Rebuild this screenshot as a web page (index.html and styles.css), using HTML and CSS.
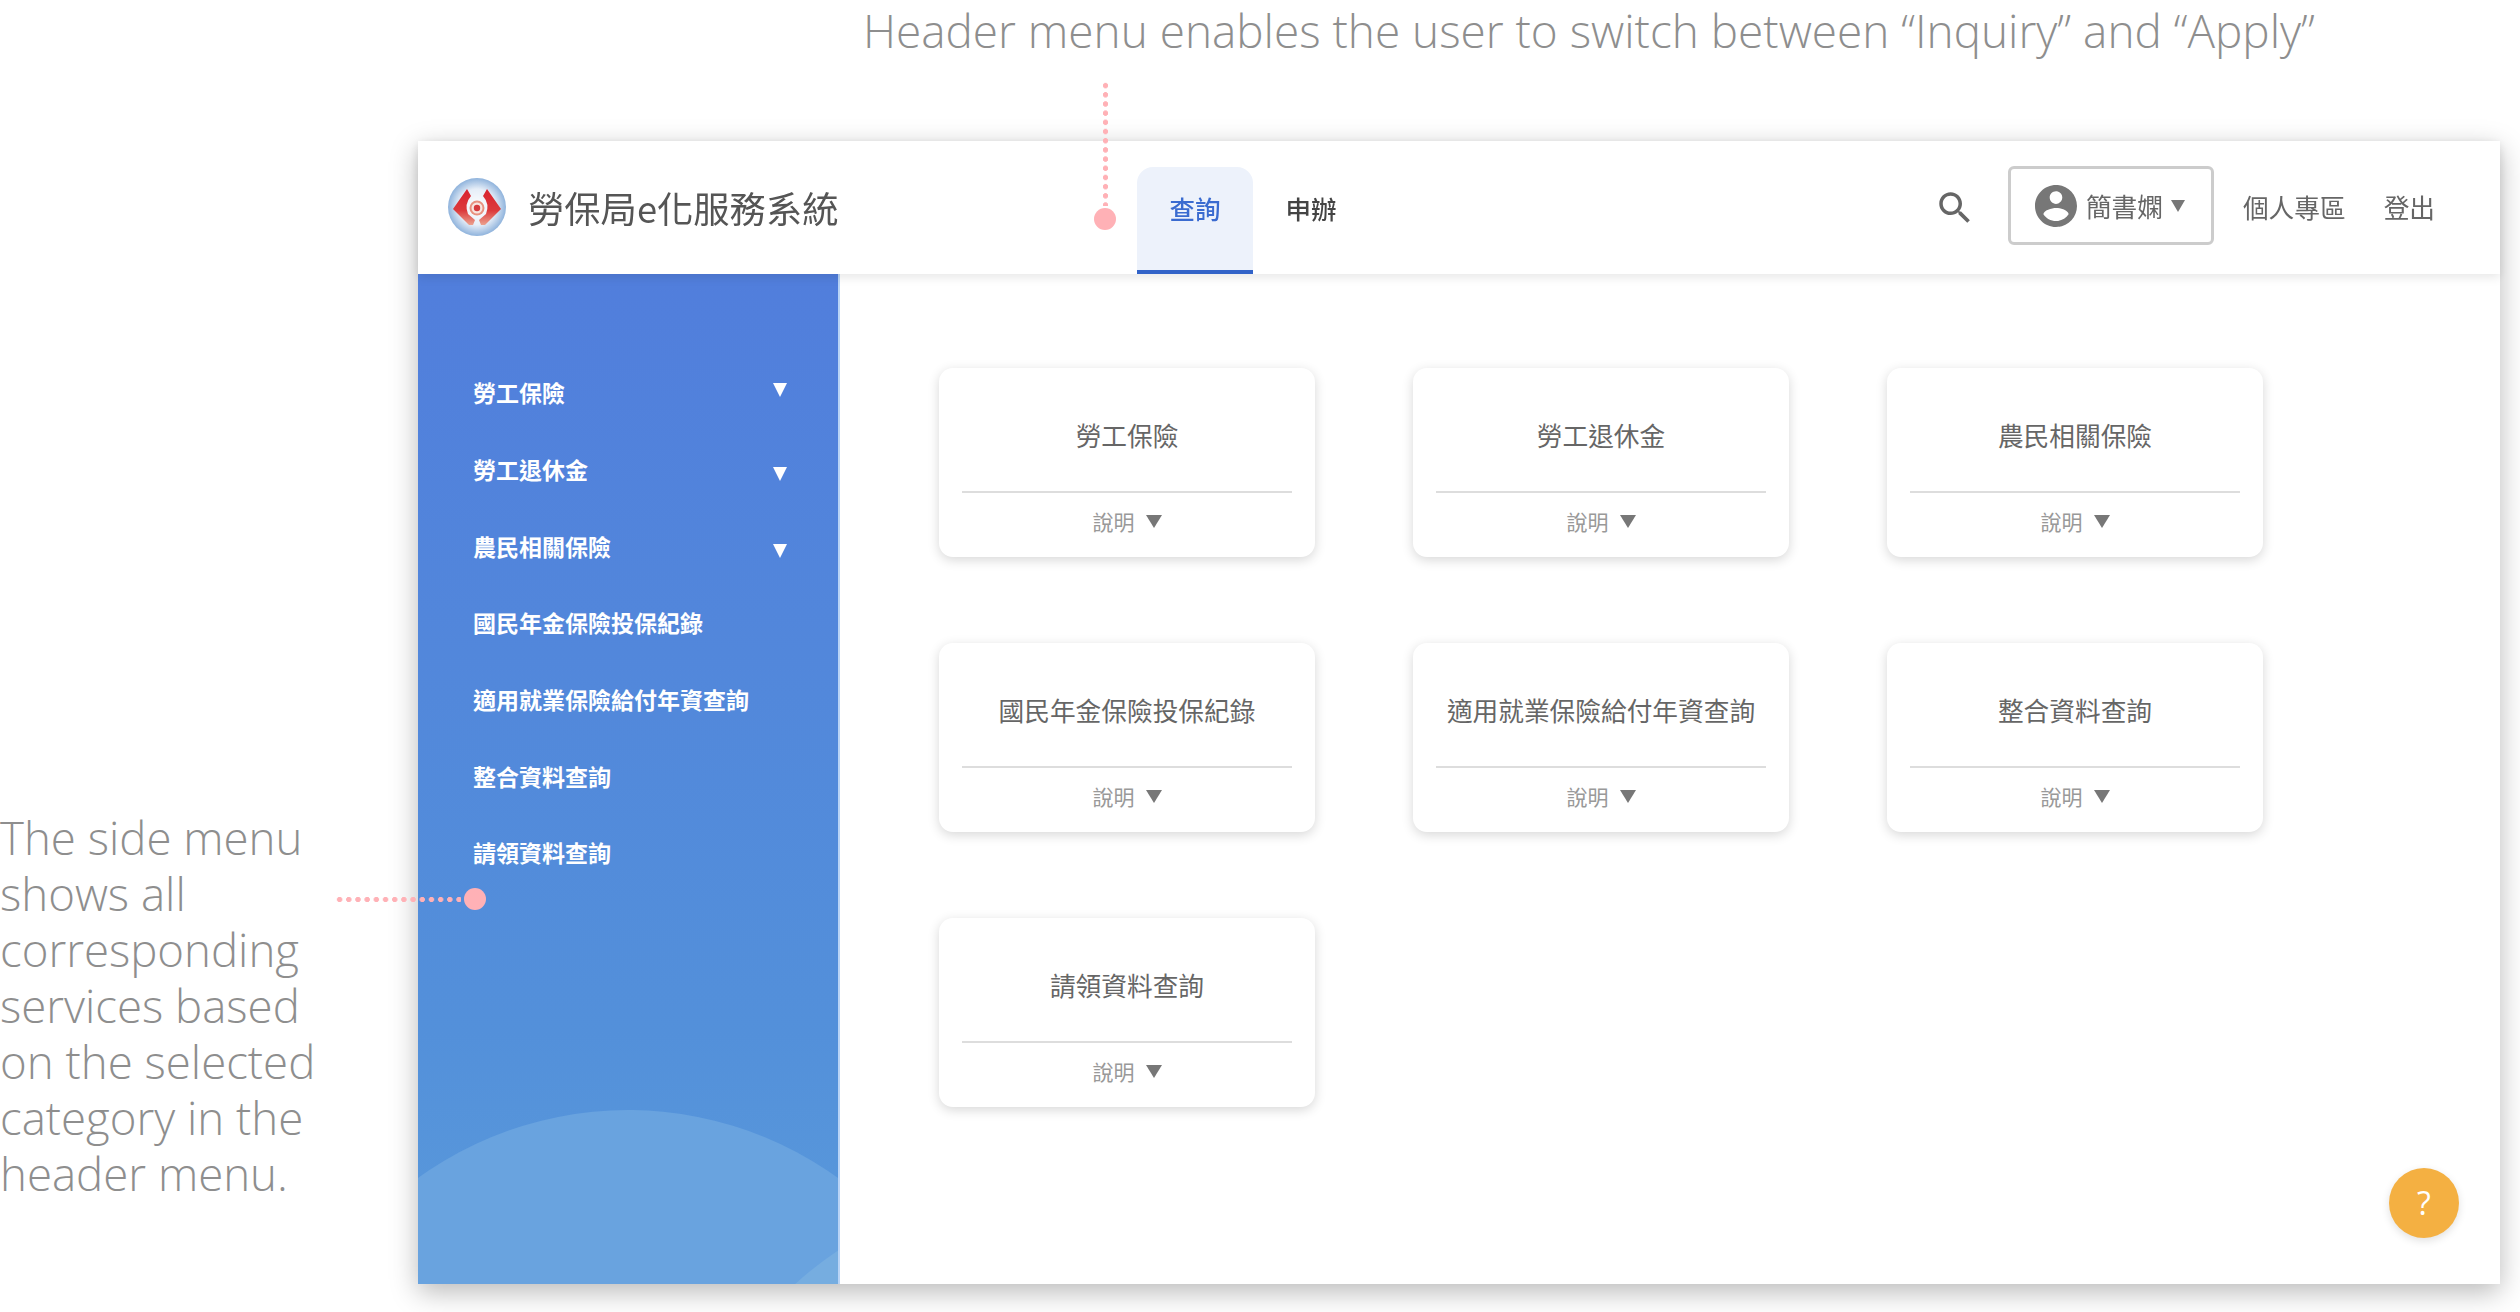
FILE: index.html
```html
<!DOCTYPE html>
<html lang="zh-Hant">
<head>
    <meta charset="UTF-8">
    <meta name="viewport" content="width=device-width, initial-scale=1.0">
    <title>勞保局e化服務系統</title>
    <link rel="stylesheet" href="styles.css">
</head>
<body>
    <div class="page">
        <p class="note-top">Header menu enables the user to switch between “Inquiry” and “Apply”</p>

        <div class="stage">
            <p class="note-side">The side menu shows all corresponding services based on the selected category in the header menu.</p>

            <div class="frame">
                <header class="topbar">
                    <div class="brand">
                        <svg class="logo" viewBox="0 0 58 58">
                            <defs>
                                <radialGradient id="logoBg" cx="50%" cy="50%" r="50%">
                                    <stop offset="0%" stop-color="#ffffff"/>
                                    <stop offset="62%" stop-color="#e6eef8"/>
                                    <stop offset="100%" stop-color="#8fb3dc"/>
                                </radialGradient>
                                <linearGradient id="logoRed" x1="0" y1="0" x2="0" y2="1">
                                    <stop offset="0%" stop-color="#d9222e"/>
                                    <stop offset="60%" stop-color="#dc3a3c"/>
                                    <stop offset="100%" stop-color="#eba28f"/>
                                </linearGradient>
                            </defs>
                            <circle cx="29" cy="29" r="29" fill="url(#logoBg)"/>
                            <path d="M5 31 L19 11 L23 18 Q16 26 20 36 L27 42 L25 47 L21 47 Z" fill="url(#logoRed)"/>
                            <path d="M53 31 L39 11 L35 18 Q42 26 38 36 L31 42 L33 47 L37 47 Z" fill="url(#logoRed)"/>
                            <circle cx="29" cy="30" r="7.5" fill="#e8917f"/>
                            <circle cx="29" cy="30" r="5.5" fill="#f7e4df"/>
                            <circle cx="29" cy="30" r="3.2" fill="#d63a3c"/>
                        </svg>
                        <span class="brand-name">勞保局e化服務系統</span>
                    </div>
                    <nav class="tabs">
                        <a class="tab active">查詢</a>
                        <a class="tab">申辦</a>
                    </nav>
                    <div class="tools">
                        <svg class="search-icon" viewBox="0 0 24 24"><path d="M15.5 14h-.79l-.28-.27C15.41 12.59 16 11.11 16 9.5 16 5.91 13.09 3 9.5 3S3 5.91 3 9.5 5.91 16 9.5 16c1.61 0 3.09-.59 4.23-1.57l.27.28v.79l5 4.99L20.49 19l-4.99-5zm-6 0C7.01 14 5 11.99 5 9.5S7.01 5 9.5 5 14 7.01 14 9.5 11.99 14 9.5 14z"/></svg>
                        <div class="user-btn">
                            <svg class="avatar" viewBox="2 2 20 20"><path d="M12 2C6.48 2 2 6.48 2 12s4.48 10 10 10 10-4.48 10-10S17.52 2 12 2zm0 3c1.66 0 3 1.34 3 3s-1.34 3-3 3-3-1.34-3-3 1.34-3 3-3zm0 14.2c-2.5 0-4.71-1.28-6-3.22.03-1.99 4-3.08 6-3.08 1.99 0 5.97 1.09 6 3.08-1.29 1.94-3.5 3.22-6 3.22z"/></svg>
                            <span>簡書嫻</span>
                            <i class="tri tri-user"></i>
                        </div>
                        <a class="tool-link">個人專區</a>
                        <a class="tool-link">登出</a>
                    </div>
                </header>

                <div class="body-row">
                    <aside class="sidebar">
                        <ul class="side-list">
                            <li class="side-item"><span>勞工保險</span><i class="tri tri-side tri-first"></i></li>
                            <li class="side-item"><span>勞工退休金</span><i class="tri tri-side"></i></li>
                            <li class="side-item"><span>農民相關保險</span><i class="tri tri-side"></i></li>
                            <li class="side-item"><span>國民年金保險投保紀錄</span></li>
                            <li class="side-item"><span>適用就業保險給付年資查詢</span></li>
                            <li class="side-item"><span>整合資料查詢</span></li>
                            <li class="side-item"><span>請領資料查詢</span></li>
                        </ul>
                    </aside>

                    <main class="content">
                        <div class="cards">
                            <div class="card"><div class="card-title">勞工保險</div><div class="card-foot">說明<i class="tri tri-card"></i></div></div>
                            <div class="card"><div class="card-title">勞工退休金</div><div class="card-foot">說明<i class="tri tri-card"></i></div></div>
                            <div class="card"><div class="card-title">農民相關保險</div><div class="card-foot">說明<i class="tri tri-card"></i></div></div>
                            <div class="card"><div class="card-title">國民年金保險投保紀錄</div><div class="card-foot">說明<i class="tri tri-card"></i></div></div>
                            <div class="card"><div class="card-title">適用就業保險給付年資查詢</div><div class="card-foot">說明<i class="tri tri-card"></i></div></div>
                            <div class="card"><div class="card-title">整合資料查詢</div><div class="card-foot">說明<i class="tri tri-card"></i></div></div>
                            <div class="card"><div class="card-title">請領資料查詢</div><div class="card-foot">說明<i class="tri tri-card"></i></div></div>
                        </div>
                        <div class="help-btn">?</div>
                    </main>
                </div>
            </div>
        </div>

        <!-- annotation pins sit on top of the mockup -->
        <div class="leader leader-v"></div>
        <div class="pin pin-top"></div>
        <div class="leader leader-h"></div>
        <div class="pin pin-side"></div>
    </div>
</body>
</html>
```

FILE: styles.css
```css
html, body {
    margin: 0;
    padding: 0;
    background: #fff;
}
body {
    font-family: "Noto Sans CJK TC", "Noto Sans", sans-serif;
}
.page {
    position: relative;
    width: 2520px;
    height: 1312px;
    overflow: hidden;
}
.note-top, .note-side {
    margin: 0;
    font-family: "Open Sans", sans-serif;
    font-weight: 300;
    color: #8e8e8e;
}
.note-top {
    height: 141px;
    padding-left: 863px;
    font-size: 45.9px;
    line-height: 60px;
    white-space: nowrap;
    box-sizing: border-box;
}
.stage {
    display: flex;
}
.note-side {
    width: 330px;
    margin-right: 88px;
    padding-top: 668px;
    font-size: 45.6px;
    line-height: 56px;
}
.frame {
    width: 2082px;
    height: 1143px;
    display: flex;
    flex-direction: column;
    background: #fff;
    box-shadow: 0 8px 26px rgba(0, 0, 0, 0.28);
    filter: blur(0.5px);
}

/* header */
.topbar {
    position: relative;
    z-index: 2;
    flex: 0 0 133px;
    display: flex;
    align-items: stretch;
    background: #fff;
    box-shadow: 0 3px 10px rgba(0, 0, 0, 0.1);
}
.brand {
    width: 719px;
    display: flex;
    align-items: center;
    padding-left: 30px;
    box-sizing: border-box;
}
.logo {
    width: 58px;
    height: 58px;
    margin-right: 22px;
    margin-top: -2px;
}
.brand-name {
    font-size: 36.3px;
    color: #555;
    margin-top: -2px;
}
.tabs {
    display: flex;
    align-items: flex-end;
    gap: 0;
}
.tab {
    width: 116px;
    height: 107px;
    box-sizing: border-box;
    display: flex;
    align-items: center;
    justify-content: center;
    padding-bottom: 22px;
    font-size: 25.5px;
    font-weight: 500;
    color: #444;
    border-bottom: 4px solid transparent;
    border-radius: 16px 16px 0 0;
}
.tab.active {
    color: #3a6bd0;
    background: #edf2fb;
    border-bottom-color: #3263c8;
}
.tools {
    margin-left: auto;
    display: flex;
    align-items: center;
    padding-right: 65px;
    font-size: 25.7px;
    color: #666;
}
.search-icon {
    width: 42px;
    height: 42px;
    fill: #666;
    margin-right: 32px;
}
.user-btn {
    width: 206px;
    height: 79px;
    box-sizing: border-box;
    display: flex;
    align-items: center;
    padding-left: 24px;
    margin-top: -4px;
    border: 3px solid #ccc;
    border-radius: 6px;
    margin-right: 29px;
}
.avatar {
    width: 42px;
    height: 42px;
    fill: #777;
    margin-right: 9px;
}
.tool-link {
    margin-right: 38px;
    margin-top: -3px;
}
.tool-link:last-child {
    margin-right: 0;
}
.tri {
    display: inline-block;
    width: 0;
    height: 0;
    border-style: solid;
    border-color: transparent;
    border-bottom-width: 0;
}
.tri-user {
    border-width: 12px 7px 0;
    border-top-color: #777;
    margin-left: 8px;
}
.tri-side {
    border-width: 14px 7px 0;
    border-top-color: #fff;
    margin-top: 10px;
}
.tri-side.tri-first {
    margin-top: -4px;
}
.tri-card {
    border-width: 13px 8px 0;
    border-top-color: #777;
    margin-left: 11px;
}

/* sidebar */
.body-row {
    flex: 1;
    display: flex;
    min-height: 0;
}
.sidebar {
    position: relative;
    width: 422px;
    overflow: hidden;
    background: linear-gradient(#517edc, #5390da 75%, #5a9adb);
    border-right: 2px solid #b9d4f6;
    box-sizing: border-box;
}
.sidebar::before, .sidebar::after {
    content: "";
    position: absolute;
    width: 716px;
    height: 716px;
    border-radius: 50%;
}
.sidebar::before {
    left: -148px;
    top: 836px;
    background: #69a3df;
}
.sidebar::after {
    left: 261px;
    top: 916px;
    background: #76ade0;
}
.side-list {
    position: relative;
    z-index: 1;
    list-style: none;
    margin: 0;
    padding: 80px 51px 0 55px;
}
.side-item {
    height: 76.7px;
    display: flex;
    align-items: center;
    justify-content: space-between;
    font-size: 23px;
    font-weight: 700;
    color: #fff;
    white-space: nowrap;
}

/* cards */
.content {
    position: relative;
    flex: 1;
    background: #fff;
}
.cards {
    display: grid;
    grid-template-columns: repeat(3, 376px);
    grid-auto-rows: 189px;
    column-gap: 98px;
    row-gap: 86px;
    padding: 94px 0 0 99px;
}
.card {
    display: flex;
    flex-direction: column;
    padding: 0 23px;
    background: #fff;
    border-radius: 14px;
    box-shadow: 0 3px 12px rgba(0, 0, 0, 0.16);
}
.card-title {
    flex: 0 0 125px;
    box-sizing: border-box;
    padding-top: 10px;
    display: flex;
    align-items: center;
    justify-content: center;
    font-size: 25.7px;
    color: #666;
    white-space: nowrap;
    border-bottom: 2px solid #ddd;
}
.card-foot {
    flex: 1;
    display: flex;
    align-items: center;
    justify-content: center;
    padding-bottom: 8px;
    font-size: 21px;
    color: #999;
}
.help-btn {
    position: absolute;
    right: 41px;
    bottom: 46px;
    width: 70px;
    height: 70px;
    line-height: 70px;
    text-align: center;
    border-radius: 50%;
    background: #f4b042;
    color: #fff;
    font-family: "Open Sans", sans-serif;
    font-size: 32px;
    box-shadow: 0 3px 8px rgba(0, 0, 0, 0.12);
}

/* annotation pins */
.leader {
    position: absolute;
    background-size: 9.2px 9.2px;
    background-image: radial-gradient(circle at center, #ffb1b6 2.4px, transparent 2.9px);
}
.leader-v {
    left: 1101px;
    top: 81px;
    width: 9px;
    height: 125px;
}
.leader-h {
    left: 335px;
    top: 895px;
    width: 126px;
    height: 9px;
}
.pin {
    position: absolute;
    width: 22px;
    height: 22px;
    border-radius: 50%;
    background: #ffb1b6;
}
.pin-top {
    left: 1094px;
    top: 208px;
}
.pin-side {
    left: 464px;
    top: 888px;
}
```
